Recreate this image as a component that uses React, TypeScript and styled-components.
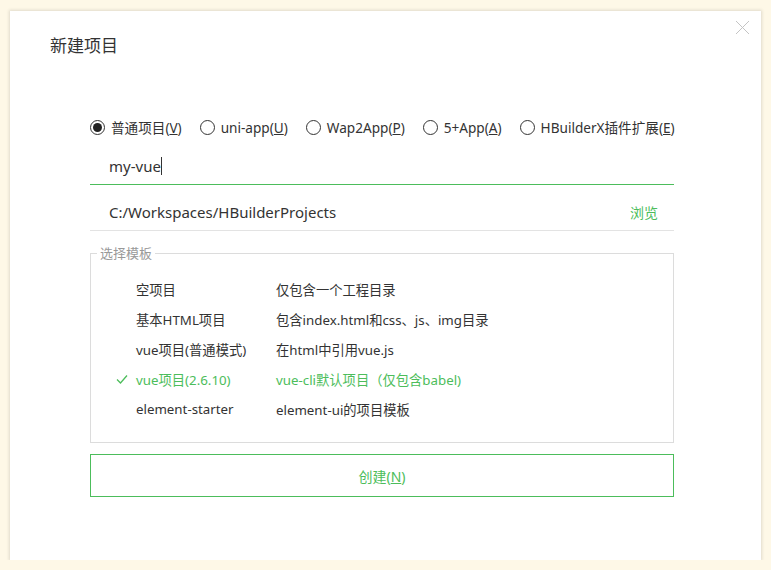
import React, { useState } from "react";
import styled, { createGlobalStyle } from "styled-components";

const GREEN = "#4cbd5b";

const GlobalStyle = createGlobalStyle`
  html, body {
    margin: 0;
    padding: 0;
    background: #fef8e7;
  }
  body {
    font-family: "Noto Sans", "Noto Sans CJK SC", sans-serif;
    color: #333;
  }
`;

const Dialog = styled.div`
  position: relative;
  box-sizing: border-box;
  margin: 11px 0 0 10px;
  width: 751px;
  height: 549px;
  background: #fff;
  box-shadow: 0 0 3px 1px rgba(0, 0, 0, 0.12);
  padding: 23px 0 0 40px;
`;

const Close = styled.button`
  position: absolute;
  top: 9px;
  right: 11px;
  width: 15px;
  height: 15px;
  padding: 0;
  border: none;
  background: none;
  cursor: pointer;
`;

const Title = styled.h1`
  margin: 0;
  font-size: 17px;
  line-height: 24px;
  font-weight: 400;
  color: #333;
`;

const Form = styled.div`
  width: 584px;
  margin: 59px 0 0 40px;
  display: flex;
  flex-direction: column;
`;

const RadioRow = styled.div`
  display: flex;
  align-items: center;
  gap: 18px;
  height: 20px;
  white-space: nowrap;
`;

const RadioLabel = styled.label`
  display: flex;
  align-items: center;
  gap: 6px;
  font-size: 13.6px;
  color: #333;
  cursor: pointer;
`;

const Circle = styled.span<{ $checked: boolean }>`
  box-sizing: border-box;
  width: 15px;
  height: 15px;
  border-radius: 50%;
  border: 1px solid #333;
  display: flex;
  align-items: center;
  justify-content: center;
  &::after {
    content: "";
    display: ${(p) => (p.$checked ? "block" : "none")};
    width: 9px;
    height: 9px;
    border-radius: 50%;
    background: #222;
  }
`;

const Field = styled.div<{ $active?: boolean }>`
  display: flex;
  align-items: center;
  justify-content: space-between;
  height: 36px;
  padding: 0 16px 0 19px;
  border-bottom: 1px solid ${(p) => (p.$active ? GREEN : "#e3e3e3")};
  font-size: 15px;
  color: #333;
`;

const NameField = styled(Field)`
  margin-top: 11px;
`;

const PathField = styled(Field)`
  margin-top: 9px;
`;

const Caret = styled.span`
  display: inline-block;
  width: 1px;
  height: 18px;
  background: #333;
  vertical-align: -3px;
`;

const Browse = styled.span`
  font-size: 14px;
  color: ${GREEN};
  cursor: pointer;
`;

const Templates = styled.fieldset`
  margin: 14px 0 0;
  padding: 13px 0 18px 0;
  border: 1px solid #dcdcdc;
  min-width: 0;
`;

const Legend = styled.legend`
  margin-left: 6px;
  padding: 0 3px;
  font-size: 13px;
  line-height: 16px;
  color: #999;
`;

const TemplateRow = styled.div<{ $selected?: boolean }>`
  display: grid;
  grid-template-columns: 45px 140px 1fr;
  align-items: center;
  height: 30px;
  font-size: 13.3px;
  color: ${(p) => (p.$selected ? GREEN : "#333")};
  cursor: pointer;
`;

const Check = styled.span`
  display: flex;
  justify-content: flex-end;
  padding-right: 8px;
`;

const CreateButton = styled.button`
  margin-top: 11px;
  height: 43px;
  border: 1px solid ${GREEN};
  background: #fff;
  color: ${GREEN};
  font-family: inherit;
  font-size: 14px;
  cursor: pointer;
`;

const kinds = [
  { label: "普通项目", key: "V" },
  { label: "uni-app", key: "U" },
  { label: "Wap2App", key: "P" },
  { label: "5+App", key: "A" },
  { label: "HBuilderX插件扩展", key: "E" },
];

const templates = [
  { name: "空项目", desc: "仅包含一个工程目录" },
  { name: "基本HTML项目", desc: "包含index.html和css、js、img目录" },
  { name: "vue项目(普通模式)", desc: "在html中引用vue.js" },
  { name: "vue项目(2.6.10)", desc: "vue-cli默认项目（仅包含babel)" },
  { name: "element-starter", desc: "element-ui的项目模板" },
];

export default function App() {
  const [kind, setKind] = useState(0);
  const [selected, setSelected] = useState(3);

  return (
    <>
      <GlobalStyle />
      <Dialog>
        <Close aria-label="关闭">
          <svg width="15" height="15" viewBox="0 0 15 15">
            <path d="M1 1L14 14M14 1L1 14" stroke="#c4c4c4" strokeWidth="1" fill="none" />
          </svg>
        </Close>
        <Title>新建项目</Title>
        <Form>
          <RadioRow>
            {kinds.map((k, i) => (
              <RadioLabel key={k.key} onClick={() => setKind(i)}>
                <Circle $checked={kind === i} />
                <span>
                  {k.label}(<u>{k.key}</u>)
                </span>
              </RadioLabel>
            ))}
          </RadioRow>
          <NameField $active>
            <span>
              my-vue
              <Caret />
            </span>
          </NameField>
          <PathField>
            <span>C:/Workspaces/HBuilderProjects</span>
            <Browse>浏览</Browse>
          </PathField>
          <Templates>
            <Legend>选择模板</Legend>
            {templates.map((t, i) => (
              <TemplateRow key={t.name} $selected={selected === i} onClick={() => setSelected(i)}>
                <Check>
                  {selected === i && (
                    <svg width="12" height="10" viewBox="0 0 12 10">
                      <path d="M1 5.5L4.5 9L11 1.5" stroke={GREEN} strokeWidth="1.3" fill="none" />
                    </svg>
                  )}
                </Check>
                <span>{t.name}</span>
                <span>{t.desc}</span>
              </TemplateRow>
            ))}
          </Templates>
          <CreateButton>
            创建(<u>N</u>)
          </CreateButton>
        </Form>
      </Dialog>
    </>
  );
}
